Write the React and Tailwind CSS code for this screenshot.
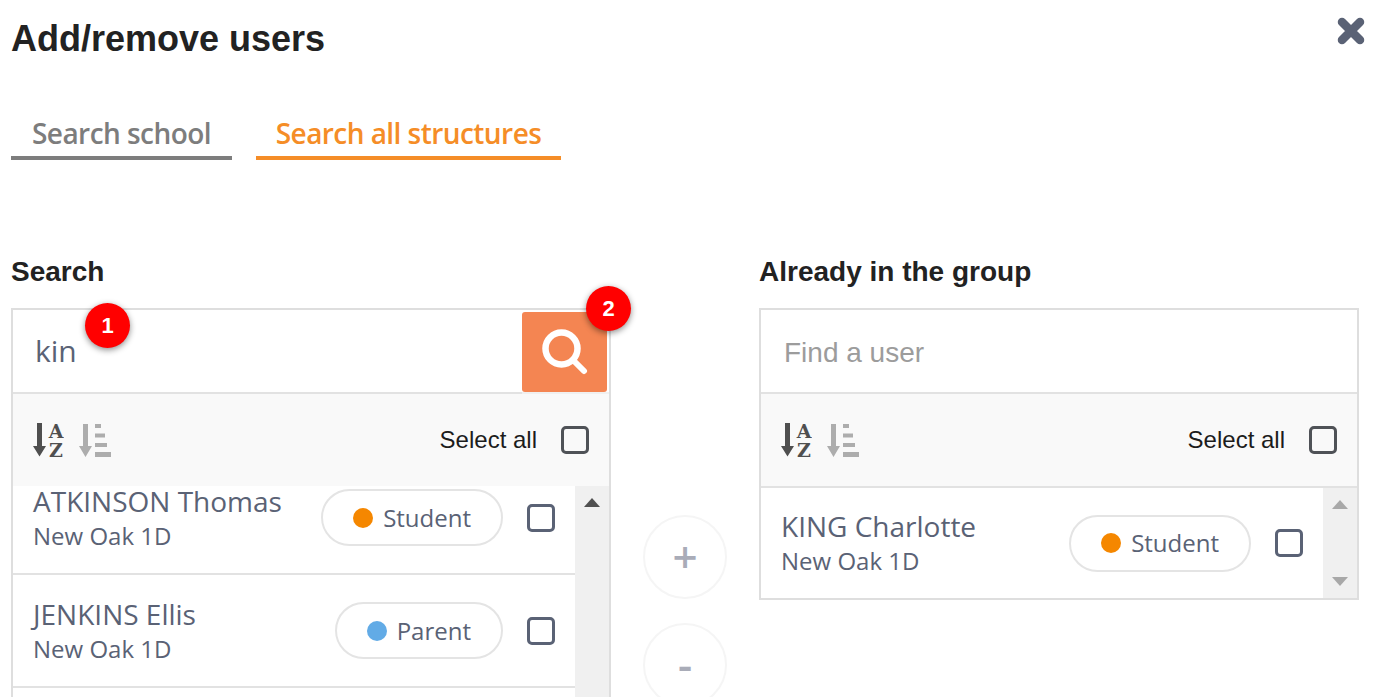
const sans = 'font-["Liberation_Sans",Arial,sans-serif]';
const open = 'font-["Open_Sans",sans-serif]';

function Check({ dark }) {
    return <span className={`block w-7 h-7 shrink-0 rounded-[5px] border-[3px] ${dark ? 'border-[#4f5257]' : 'border-[#5a6275] bg-white'}`} />;
}

function AlphaIcon() {
    return (
        <svg width="31" height="34" viewBox="0 0 31 34" fill="#4f4f4f" className="font-['DejaVu_Serif',serif] font-bold">
            <path d="M4 0h5v23h4l-6.500 10.500L0 23h4z" />
            <text x="23" y="14.500" fontSize="19" textAnchor="middle">A</text>
            <text x="23" y="33.500" fontSize="19" textAnchor="middle">Z</text>
        </svg>
    );
}

function AmountIcon() {
    return (
        <svg width="32" height="33" viewBox="0 0 32 33" fill="#adadad" className="ml-[15px]">
            <path d="M4 0h5v22h4l-6.500 11L0 22h4z" />
            <rect x="16" y="0" width="6" height="4" />
            <rect x="16" y="9.500" width="10" height="4" />
            <rect x="16" y="19" width="12" height="4" />
            <rect x="16" y="28" width="16" height="5" />
        </svg>
    );
}

function Toolbar() {
    return (
        <div className="h-[92px] bg-[#f9f9f9] flex items-center pl-5 pr-5">
            <AlphaIcon />
            <AmountIcon />
            <span className={`ml-auto mr-6 text-[24px] text-[#1c1c1c] ${sans}`}>Select all</span>
            <Check dark />
        </div>
    );
}

function Row({ name, role, color, height }) {
    return (
        <div className={`flex items-center pl-5 pr-5 ${height} ${open}`}>
            <div className="flex-1 text-[#5a6275]">
                <div className="text-[28px] leading-[36px]">{name}</div>
                <div className="text-[24px] leading-[34px]">New Oak 1D</div>
            </div>
            <span className="h-[57px] px-[30px] mr-[24px] flex items-center rounded-full border-2 border-[#e4e4e4] text-[24px] text-[#5a6275]">
                <span className={`w-5 h-5 rounded-full mr-[10px] ${color}`} />
                {role}
            </span>
            <Check />
        </div>
    );
}

function Badge({ n, className }) {
    return (
        <span className={`absolute w-[45px] h-[45px] rounded-full bg-[#ff0000] text-white text-[22px] font-bold flex items-center justify-center shadow-[0_2px_6px_rgba(0,0,0,0.45)] ${sans} ${className}`}>
            {n}
        </span>
    );
}

function Arrow({ down, color }) {
    return <span className={`w-0 h-0 border-x-[8px] border-x-transparent ${down ? 'border-t-[9px]' : 'border-b-[9px]'} ${color}`} />;
}

export default function App() {
    return (
        <div className="relative w-[1378px] h-[697px] overflow-hidden bg-white pl-[11px]">
            <h1 className={`pt-4 text-[36px] leading-[46px] font-bold text-[#222] ${sans}`}>Add/remove users</h1>
            <svg width="28" height="28" viewBox="0 0 28 28" className="absolute left-[1337px] top-[17px]" stroke="#5a6275" strokeWidth="8.500" strokeLinecap="round">
                <path d="M5 5 L23 23 M23 5 L5 23" />
            </svg>

            <div className={`mt-12 flex gap-6 text-[28px] font-semibold tracking-[-0.55px] text-center ${open}`}>
                <span className="w-[221px] h-[50px] border-b-4 border-[#7d7d7d] text-[#7d7d7d] leading-[46px]">Search school</span>
                <span className="w-[305px] h-[50px] border-b-4 border-[#f58d27] text-[#f58d27] leading-[46px]">Search all structures</span>
            </div>

            <div className="mt-[91px] flex items-start">
                <div className="w-[600px]">
                    <h2 className={`h-[57px] text-[28px] font-bold text-[#222] ${sans}`}>Search</h2>
                    <div className="h-[500px] border-2 border-[#dedede] border-b-0">
                        <div className="h-[84px] flex">
                            <span className={`flex-1 pl-[22px] pt-[18px] text-[30px] border-b-2 border-[#e2e2e2] text-[#5a6275] ${open}`}>kin</span>
                            <span className="w-[87px] h-[84px] pt-[2px] pr-[2px] border-b-2 border-[#f0f0f0]">
                                <span className="h-[80px] rounded-[3px] bg-[#f48552] flex items-center justify-center">
                                    <svg width="46" height="46" viewBox="0 0 46 46" fill="none" stroke="#fff" strokeLinecap="round">
                                        <circle cx="19.500" cy="19.500" r="16" strokeWidth="6.500" />
                                        <path d="M32 32 L42 42" strokeWidth="6" />
                                    </svg>
                                </span>
                            </span>
                        </div>
                        <Toolbar />
                        <div className="flex h-[300px]">
                            <div className="flex-1 overflow-hidden">
                                <div className="-mt-6">
                                    <div className="border-b-2 border-[#e2e2e2]">
                                        <Row name="ATKINSON Thomas" role="Student" color="bg-[#f58700]" height="h-[111px]" />
                                    </div>
                                    <div className="border-b-2 border-[#e2e2e2]">
                                        <Row name="JENKINS Ellis" role="Parent" color="bg-[#62abe6]" height="h-[111px]" />
                                    </div>
                                </div>
                            </div>
                            <div className="w-[34px] h-full bg-[#f0f0f0] flex flex-col items-center pt-3">
                                <Arrow color="border-b-[#505050]" />
                            </div>
                        </div>
                    </div>
                </div>

                <div className={`w-[148px] pt-[264px] flex flex-col items-center gap-6 text-[#a9acb8] text-[44px] font-semibold ${open}`}>
                    <span className="w-[84px] h-[84px] shrink-0 rounded-full border-2 border-[#f5f5f5] flex items-center justify-center pb-[2px]">+</span>
                    <span className="w-[84px] h-[84px] shrink-0 rounded-full border-2 border-[#f5f5f5] flex items-center justify-center pb-[2px]">-</span>
                </div>

                <div className="w-[600px]">
                    <h2 className={`h-[57px] text-[28px] font-bold text-[#222] ${sans}`}>Already in the group</h2>
                    <div className="border-2 border-[#dedede]">
                        <div className={`h-[84px] flex items-center pl-[23px] pt-1 border-b-2 border-[#e2e2e2] text-[28px] text-[#9c9c9c] ${sans}`}>Find a user</div>
                        <Toolbar />
                        <div className="flex border-t-2 border-[#e2e2e2]">
                            <div className="flex-1">
                                <Row name="KING Charlotte" role="Student" color="bg-[#f58700]" height="h-[110px]" />
                            </div>
                            <div className="w-[34px] bg-[#f0f0f0] flex flex-col justify-between items-center py-3">
                                <Arrow color="border-b-[#a8a8a8]" />
                                <Arrow down color="border-t-[#a8a8a8]" />
                            </div>
                        </div>
                    </div>
                </div>
            </div>

            <Badge n="1" className="left-[85px] top-[303px]" />
            <Badge n="2" className="left-[586px] top-[286px]" />
        </div>
    );
}
